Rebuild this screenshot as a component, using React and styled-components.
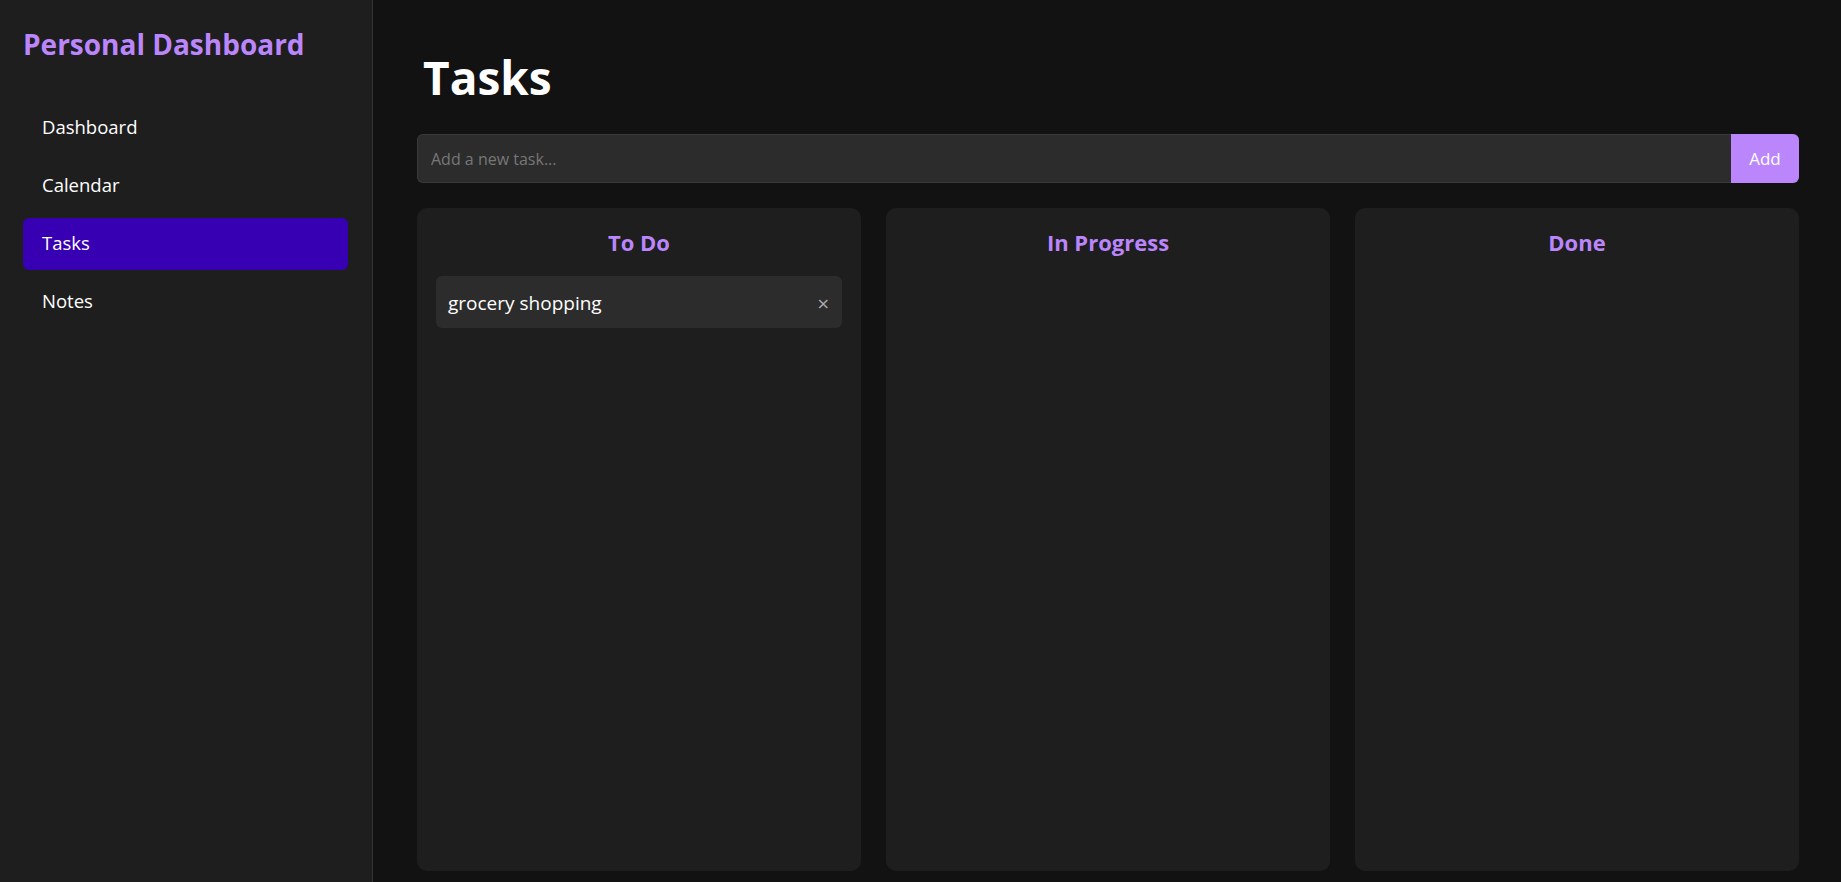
import React, { useState } from "react";
import styled, { createGlobalStyle } from "styled-components";

const GlobalStyle = createGlobalStyle`
  * { box-sizing: border-box; }
  body {
    margin: 0;
    background: #121212;
    color: #ffffff;
    font-family: "Open Sans", "Noto Sans", sans-serif;
  }
`;

const Layout = styled.div`
  display: flex;
  height: 100vh;
  overflow: hidden;
`;

const Sidebar = styled.aside`
  width: 373px;
  flex-shrink: 0;
  background: #1e1e1e;
  border-right: 1px solid #333;
  padding: 22px 24px 24px 23px;
`;

const Brand = styled.h2`
  margin: 0 0 36px 0;
  font-size: 28px;
  line-height: 44px;
  font-weight: 700;
  color: #bb86fc;
  white-space: nowrap;
`;

const Nav = styled.nav`
  display: flex;
  flex-direction: column;
  gap: 6px;
`;

const NavItem = styled.a`
  display: flex;
  align-items: center;
  height: 52px;
  padding: 0 19px 3px;
  border-radius: 6px;
  font-size: 18.5px;
  color: #ffffff;
  text-decoration: none;
  cursor: pointer;
  background: ${(p) => (p.$active ? "#3700b3" : "transparent")};
`;

const Main = styled.main`
  flex: 1;
  display: flex;
  flex-direction: column;
  padding: 46px 42px 11px 44px;
  min-width: 0;
`;

const PageTitle = styled.h1`
  margin: 0 0 26px 6px;
  font-size: 46px;
  line-height: 62px;
  font-weight: 700;
`;

const AddRow = styled.form`
  display: flex;
  height: 49px;
  margin-bottom: 25px;
`;

const TaskInput = styled.input`
  flex: 1;
  background: #2c2c2c;
  border: 1px solid #3a3a3a;
  border-right: none;
  border-radius: 6px 0 0 6px;
  padding: 0 13px;
  color: #fff;
  font-family: inherit;
  font-size: 16px;
  outline: none;

  &::placeholder {
    color: #777;
  }
`;

const AddButton = styled.button`
  width: 68px;
  border: none;
  border-radius: 0 6px 6px 0;
  background: #bb86fc;
  color: #fff;
  font-family: inherit;
  font-size: 17px;
  cursor: pointer;
`;

const Board = styled.div`
  flex: 1;
  display: grid;
  grid-template-columns: repeat(3, 1fr);
  gap: 25px;
  min-height: 0;
`;

const Column = styled.section`
  background: #1e1e1e;
  border-radius: 10px;
  padding: 20px 19px;
`;

const ColumnTitle = styled.h3`
  margin: 0 0 20px;
  text-align: center;
  font-size: 22px;
  line-height: 28px;
  font-weight: 700;
  color: #bb86fc;
`;

const TaskCard = styled.div`
  display: flex;
  align-items: center;
  justify-content: space-between;
  height: 52px;
  padding: 2px 12px 0;
  margin-bottom: 10px;
  background: #2c2c2c;
  border-radius: 6px;
  font-size: 19px;
`;

const RemoveButton = styled.button`
  background: none;
  border: none;
  padding: 0;
  color: #aaa;
  font-size: 16px;
  cursor: pointer;
  font-family: "DejaVu Sans", sans-serif;
`;

const columns = [
  { id: "todo", title: "To Do" },
  { id: "progress", title: "In Progress" },
  { id: "done", title: "Done" },
];

export default function App() {
  const [tasks, setTasks] = useState([
    { id: 1, text: "grocery shopping", status: "todo" },
  ]);
  const [draft, setDraft] = useState("");

  const addTask = (e) => {
    e.preventDefault();
    if (!draft.trim()) return;
    setTasks([...tasks, { id: Date.now(), text: draft.trim(), status: "todo" }]);
    setDraft("");
  };

  return (
    <>
      <GlobalStyle />
      <Layout>
        <Sidebar>
          <Brand>Personal Dashboard</Brand>
          <Nav>
            <NavItem>Dashboard</NavItem>
            <NavItem>Calendar</NavItem>
            <NavItem $active>Tasks</NavItem>
            <NavItem>Notes</NavItem>
          </Nav>
        </Sidebar>
        <Main>
          <PageTitle>Tasks</PageTitle>
          <AddRow onSubmit={addTask}>
            <TaskInput
              placeholder="Add a new task..."
              value={draft}
              onChange={(e) => setDraft(e.target.value)}
            />
            <AddButton type="submit">Add</AddButton>
          </AddRow>
          <Board>
            {columns.map((col) => (
              <Column key={col.id}>
                <ColumnTitle>{col.title}</ColumnTitle>
                {tasks
                  .filter((t) => t.status === col.id)
                  .map((t) => (
                    <TaskCard key={t.id}>
                      <span>{t.text}</span>
                      <RemoveButton
                        onClick={() => setTasks(tasks.filter((x) => x.id !== t.id))}
                      >
                        ×
                      </RemoveButton>
                    </TaskCard>
                  ))}
              </Column>
            ))}
          </Board>
        </Main>
      </Layout>
    </>
  );
}
